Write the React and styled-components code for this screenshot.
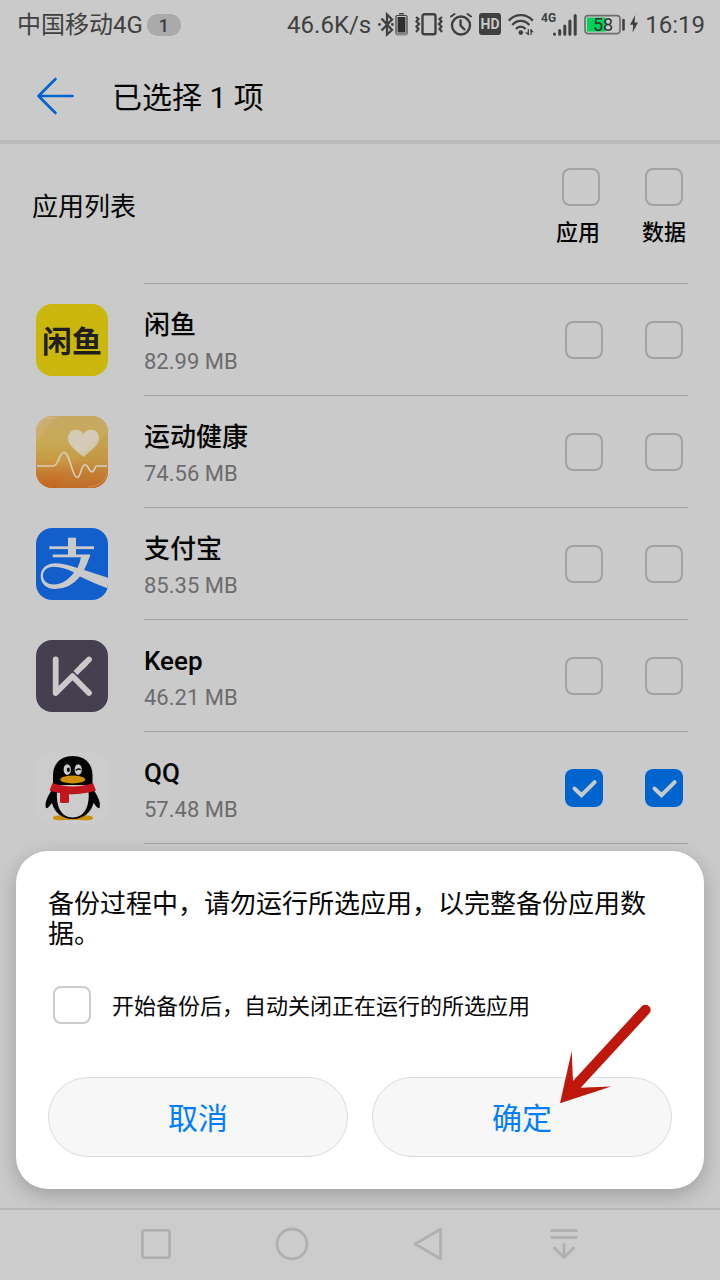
import React from "react";
import styled, { createGlobalStyle } from "styled-components";

const GlobalStyle = createGlobalStyle`
  * { box-sizing: border-box; }
  body {
    margin: 0;
    background: #cacaca;
    color: #050505;
    font-family: Roboto, "Noto Sans CJK SC", sans-serif;
  }
  h1, h2, h3, p, ul { margin: 0; padding: 0; font-weight: 400; }
  button { font: inherit; }
  svg { display: block; }
`;

const Screen = styled.div`
  min-height: 100vh;
  display: flex;
  flex-direction: column;
`;

const Main = styled.main`
  position: relative;
  flex: 1;
  display: flex;
  flex-direction: column;
`;

const StatusBar = styled.header`
  height: 50px;
  padding: 0 15px 0 17px;
  display: flex;
  align-items: center;
  justify-content: space-between;
  font-size: 24px;
  line-height: 32px;
  color: #404040;
`;

const StatusGroup = styled.div`
  display: flex;
  align-items: center;
  gap: ${(p) => p.$gap}px;
`;

const CountPill = styled.span`
  width: 34px;
  height: 22px;
  border-radius: 11px;
  background: #aaaaaa;
  font-size: 18px;
  font-weight: 500;
  line-height: 23px;
  text-align: center;
`;

const TitleBar = styled.div`
  height: 94px;
  padding: 2px 32px 0;
  display: flex;
  align-items: center;
  gap: 36px;
  border-bottom: 4px solid #bababa;
`;

const BackButton = styled.button`
  width: 44px;
  height: 44px;
  padding: 0;
  border: 0;
  background: none;
`;

const Title = styled.h1`
  padding-top: 4px;
  font-size: 30px;
  line-height: 40px;
`;

const ListHead = styled.div`
  height: 139px;
  padding: 24px 34px 0 32px;
  display: flex;
  justify-content: space-between;
`;

const ListTitle = styled.h2`
  padding-top: 22px;
  font-size: 26px;
  line-height: 34px;
`;

const ColumnHeads = styled.div`
  display: flex;
  gap: 42px;
`;

const ColumnHead = styled.label`
  display: flex;
  flex-direction: column;
  align-items: ${(p) => p.$align};
  gap: 12px;
  font-size: 22px;
  font-weight: 500;
  line-height: 30px;
`;

const Divider = styled.hr`
  height: 1px;
  margin: 0 32px 0 144px;
  border: 0;
  background: #a2a2a2;
`;

const AppRow = styled.li`
  display: flex;
  align-items: center;
  gap: 36px;
  padding: 0 32px 0 36px;
`;

const RowBody = styled.div`
  flex: 1;
  height: 112px;
  padding-right: 5px;
  display: flex;
  align-items: center;
  justify-content: space-between;
  border-bottom: 1px solid #a2a2a2;
`;

const RowText = styled.div`
  padding-top: 6px;
`;

const AppName = styled.h3`
  font-size: 26px;
  font-weight: 500;
  line-height: 38px;
`;

const AppSize = styled.p`
  font-size: 22px;
  line-height: 36px;
  color: #6c6c6c;
`;

const RowChecks = styled.div`
  display: flex;
  gap: 42px;
`;

const AppIcon = styled.div`
  width: 72px;
  height: 72px;
  flex: none;
  border-radius: 16px;
  overflow: hidden;
  display: grid;
  place-items: center;
  background: ${(p) => p.$bg};
`;

const WordLogo = styled.span`
  padding-top: 4px;
  color: #1f1f1f;
  font-size: 30px;
  font-weight: 700;
  line-height: 36px;
`;

const CheckBox = styled.span`
  width: 38px;
  height: 38px;
  flex: none;
  display: grid;

  > * { grid-area: 1 / 1; }

  input {
    appearance: none;
    width: 38px;
    height: 38px;
    margin: 0;
    border: 2px solid ${(p) => p.$line || "#a2a2a2"};
    border-radius: 8px;
  }

  svg {
    visibility: hidden;
    pointer-events: none;
  }

  input:checked {
    border: 0;
    background: #0064cf;
  }

  input:checked + svg { visibility: visible; }
`;

const Dialog = styled.section`
  position: absolute;
  left: 16px;
  right: 16px;
  bottom: 19px;
  padding: 38px 32px 32px;
  border-radius: 32px;
  background: #ffffff;
  box-shadow: 0 6px 20px rgba(0, 0, 0, 0.22);
`;

const Message = styled.p`
  font-size: 26px;
  line-height: 30px;
`;

const Option = styled.label`
  margin: 37px 0 53px;
  padding-left: 5px;
  display: flex;
  align-items: center;
  gap: 21px;
  font-size: 22px;
  line-height: 30px;
`;

const OptionText = styled.span`
  padding-top: 4px;
`;

const Actions = styled.div`
  display: flex;
  gap: 24px;
`;

const ActionButton = styled.button`
  flex: 1;
  height: 80px;
  padding: 4px 0 0;
  border: 1px solid #dcdcdc;
  border-radius: 40px;
  background: #f7f7f7;
  color: #007dff;
  font-size: 30px;
  line-height: 40px;
`;

const Pointer = styled.svg`
  position: absolute;
  right: 48px;
  bottom: 81px;
  pointer-events: none;
`;

const NavBar = styled.nav`
  position: relative;
  height: 72px;
  padding: 0 88px 2px;
  display: flex;
  border-top: 2px solid #b8b8b8;
  background: #cccccc;
`;

const NavButton = styled.button`
  flex: 1;
  padding: 0;
  border: 0;
  background: none;
  display: grid;
  place-items: center;
`;

function Check({ line, ...rest }) {
  return (
    <CheckBox $line={line}>
      <input type="checkbox" {...rest} />
      <svg width="38" height="38" viewBox="0 0 38 38" fill="none" stroke="#cacaca" strokeWidth="4" strokeLinecap="round" strokeLinejoin="miter" aria-hidden="true">
        <path d="M9.5 19.5 16.5 26.2 29.7 13.2" />
      </svg>
    </CheckBox>
  );
}

const DARK = "#404040";

function BluetoothIcon() {
  return (
    <svg width="30" height="26" viewBox="0 0 30 26" aria-hidden="true">
      <g fill="none" stroke={DARK} strokeWidth="2.3">
        <path d="M3.5 6.5 14 18 9 22.500V2.500L14 7.500 3.500 18.500" />
      </g>
      <circle cx="1.5" cy="12.5" r="1.4" fill={DARK} />
      <circle cx="14.400" cy="12.500" r="1.400" fill={DARK} />
      <rect x="21" y="1" width="5" height="1.5" fill={DARK} />
      <rect x="18" y="3.500" width="11" height="19" rx="1.200" fill="none" stroke={DARK} strokeWidth="1.200" />
      <rect x="19.600" y="5" width="7.800" height="15.500" fill="#2e2e2e" />
      <rect x="18" y="21" width="11" height="2.400" fill="#858585" />
    </svg>
  );
}

function VibrateIcon() {
  return (
    <svg width="28" height="26" viewBox="0 0 28 26" fill="none" stroke={DARK} aria-hidden="true">
      <rect x="7.500" y="2.200" width="13" height="20" rx="2" strokeWidth="2.400" />
      <path d="M1 5 3.500 7 1.500 9.500 4 12 1.500 14.500 3.500 17 1 20M27 5 24.500 7 26.500 9.500 24 12 26.500 14.500 24.500 17 27 20" strokeWidth="2.200" />
    </svg>
  );
}

function AlarmIcon() {
  return (
    <svg width="22" height="26" viewBox="0 0 22 26" fill="none" stroke={DARK} strokeWidth="2" strokeLinecap="round" aria-hidden="true">
      <circle cx="11" cy="13.500" r="9" strokeWidth="2.400" />
      <path d="M1 4.500 4.500 2M21 4.500 17.500 2" />
      <path d="M10.600 8.500V13.500L14.500 17.500" strokeWidth="2.400" />
    </svg>
  );
}

function HdIcon() {
  return (
    <svg width="22" height="26" viewBox="0 0 22 26" role="img" aria-label="HD">
      <rect y="1" width="22" height="22" rx="3" fill={DARK} />
      <text x="11" y="17" textAnchor="middle" fontSize="14" fontWeight="700" fill="#cacaca">HD</text>
    </svg>
  );
}

function WifiIcon() {
  return (
    <svg width="26" height="26" viewBox="0 0 26 26" fill="none" stroke={DARK} strokeWidth="2.300" aria-hidden="true">
      <path d="M.8 8.600C7.500 1.300 18 1.300 24.800 8.600" />
      <path d="M4.300 13C9 7.600 16.500 7.600 21.300 13" />
      <path d="M8 17C10.600 13.800 15 13.800 17.600 17" />
      <circle cx="12.800" cy="20.600" r="2.300" fill={DARK} stroke="none" />
      <path d="M21 17.500V23.500L16.800 20.500H21M22.800 23.500V17L26 20.200H22.800" fill={DARK} stroke="none" />
      <path d="M20.300 17V23M23 17V23" strokeWidth="1.200" />
    </svg>
  );
}

function SignalIcon() {
  return (
    <svg width="36" height="26" viewBox="0 0 36 26" role="img" aria-label="4G">
      <text x="0" y="10" fontSize="12" fontWeight="700" fill={DARK}>4G</text>
      <path d="M13.500 22.300V22M18.700 22.300V18.500M23.800 22.300V14M28.900 22.300V9M34.200 22.300V3.500" stroke={DARK} strokeWidth="3" strokeLinecap="round" />
    </svg>
  );
}

function BatteryIcon() {
  return (
    <svg width="42" height="26" viewBox="0 0 42 26" role="img" aria-label="58%">
      <rect x="1" y="3.600" width="35" height="18" rx="3" fill="none" stroke="#6c6c6c" strokeWidth="1.600" />
      <rect x="3" y="5.600" width="18.500" height="14" fill="#00d25a" />
      <path d="M39.500 8V17.500" stroke={DARK} strokeWidth="2.600" strokeLinecap="round" />
      <text x="19" y="19" textAnchor="middle" fontSize="18" fill="#333333">58</text>
    </svg>
  );
}

function BoltIcon() {
  return (
    <svg width="8" height="26" viewBox="0 0 8 26" fill={DARK} aria-hidden="true">
      <path d="M5.200 3 0 12.800H3.200L2.600 20.500 8 10.600H4.600Z" />
    </svg>
  );
}

function HealthLogo() {
  return (
    <svg width="72" height="72" viewBox="0 0 72 72" aria-hidden="true">
      <defs>
        <linearGradient id="health-bg" x1="0" y1="0" x2="0" y2="1">
          <stop offset="0" stopColor="#c6a765" />
          <stop offset="0.3" stopColor="#c8ab58" />
          <stop offset="0.62" stopColor="#c79a43" />
          <stop offset="0.8" stopColor="#c6792f" />
          <stop offset="1" stopColor="#c3651f" />
        </linearGradient>
        <linearGradient id="health-heart" x1="0" y1="0" x2="1" y2="1">
          <stop offset="0" stopColor="#d3cab6" />
          <stop offset="0.55" stopColor="#d4ccb8" />
          <stop offset="1" stopColor="#c9bb98" />
        </linearGradient>
      </defs>
      <rect width="72" height="72" fill="url(#health-bg)" />
      <path d="M0 26C8 16 12 8 24 0H8L0 8Z" fill="#d0b98a" opacity="0.3" />
      <path d="M72 14C60 34 32 42 22 72H72Z" fill="#b98a4a" opacity="0.22" />
      <path d="M47.500 41C40 34 32 29.500 32 22C32 17 35.500 13.700 40 13.700C43.500 13.700 46 15.500 47.500 18C49 15.500 51.500 13.700 55 13.700C59.500 13.700 63 17 63 22C63 29.500 55 34 47.500 41Z" fill="url(#health-heart)" />
      <path d="M1 50H17C23 50 23 36.500 28 36.500C34 36.500 36 61.500 41 61.500C45 61.500 45 48.800 49 48.800C52.500 48.800 53 55.800 56 55.800C59 55.800 58 50 61 50H71" fill="none" stroke="#d8cfbd" strokeWidth="1.600" />
      <path d="M52 71C62 70 69 66 71 57" fill="none" stroke="#dcb08a" strokeWidth="1" opacity="0.5" />
      <path d="M1.500 12C4 5 8 2 16 1.500" fill="none" stroke="#dcd2bc" strokeWidth="1" opacity="0.5" />
    </svg>
  );
}

function AlipayLogo() {
  return (
    <svg width="72" height="72" viewBox="0 0 72 72" fill="#cacaca" aria-hidden="true">
      <rect x="13.300" y="18.300" width="44.700" height="2.800" />
      <rect x="32" y="9.700" width="8" height="17.500" />
      <rect x="16.700" y="26.500" width="37.300" height="2.800" />
      <path fillRule="evenodd" d="M45.500 27H54Q51.500 36 48 42L72 49.800V60.500Q58 55.500 44 48.500Q34 61 19 61C10 61 4.700 55 4.700 48C4.700 40 11 35.300 20 35.300C27 35.300 34 37.500 41.500 40Q44 35 45.500 27ZM38 44.500C31 41 24 38.800 18 38.800C10.500 38.800 7 43 7 48C7 53 12 56.500 18 56.500C26 56.500 33 51 38 44.500Z" />
    </svg>
  );
}

function KeepLogo() {
  return (
    <svg width="72" height="72" viewBox="0 0 72 72" fill="none" stroke="#cacaca" strokeWidth="5.800" aria-hidden="true">
      <path d="M19.700 19.500V53L36.500 36.200 53 53" strokeLinecap="round" strokeLinejoin="round" />
      <path d="M39.500 33 50 22.500" />
      <path d="M46 26.500 53 19.500" strokeLinecap="round" />
    </svg>
  );
}

function QqLogo() {
  return (
    <svg width="72" height="72" viewBox="0 0 72 72" aria-hidden="true">
      <path d="M17 66C17 63 24 62.500 36 64C48 62.500 57 63 57 66C57 69 50 68 36.700 68C24 68 17 69 17 66Z" fill="#cb9008" />
      <path d="M16 38C11 45 8.500 51 10 56C12 57 14 53 16 51C18 60 26 67 36.700 67C47.500 67 55.500 60 57.500 51C59.500 53 61.500 57 63.500 56C65 51 62.500 45 57.500 38Z" fill="#030303" />
      <path d="M17 33V23C17 11.500 25 4 36.700 4C48.500 4 56.500 11.500 56.500 23V33Z" fill="#030303" />
      <path d="M21 40C20 54 25 65.500 36.700 65.500C48.500 65.500 54 54 52.500 39C42 43 31 43 21 40Z" fill="#cccccc" />
      <path d="M16.500 31C29 35.500 45 35.500 57 31L60 38.500C53 41 43 42.500 33 42V50.500C30 51.200 27 51.200 24 50.500V41C20 40.500 17 39.500 13.500 38.500Z" fill="#c0171d" />
      <ellipse cx="31.200" cy="17.600" rx="3.600" ry="5.300" fill="#cccccc" />
      <ellipse cx="42.200" cy="17.600" rx="3.600" ry="5.300" fill="#cccccc" />
      <ellipse cx="32.300" cy="17.800" rx="1.500" ry="2.200" fill="#030303" />
      <path d="M39.800 18.500Q42 15.800 44.800 17.800" fill="none" stroke="#030303" strokeWidth="1.300" />
      <ellipse cx="36.700" cy="27.500" rx="12.500" ry="3.900" fill="#cb9008" />
    </svg>
  );
}

const APPS = [
  { name: "闲鱼", size: "82.99 MB", bg: "#cbb70b", logo: <WordLogo>闲鱼</WordLogo> },
  { name: "运动健康", size: "74.56 MB", bg: "#c79a43", logo: <HealthLogo /> },
  { name: "支付宝", size: "85.35 MB", bg: "#125fcc", logo: <AlipayLogo /> },
  { name: "Keep", size: "46.21 MB", bg: "#463f4d", logo: <KeepLogo /> },
  { name: "QQ", size: "57.48 MB", bg: "#cccccc", logo: <QqLogo />, checked: true },
];

export default function App() {
  return (
    <Screen>
      <GlobalStyle />
      <Main>
        <StatusBar>
          <StatusGroup $gap={4}>
            <span>中国移动4G</span>
            <CountPill>1</CountPill>
          </StatusGroup>
          <StatusGroup $gap={7}>
            <span>46.6K/s</span>
            <BluetoothIcon />
            <VibrateIcon />
            <AlarmIcon />
            <HdIcon />
            <WifiIcon />
            <SignalIcon />
            <StatusGroup $gap={4}>
              <BatteryIcon />
              <BoltIcon />
            </StatusGroup>
            <span>16:19</span>
          </StatusGroup>
        </StatusBar>

        <TitleBar>
          <BackButton type="button" aria-label="返回">
            <svg width="44" height="44" viewBox="0 0 44 44" fill="none" stroke="#0064cf" strokeWidth="2.600" strokeLinecap="round" strokeLinejoin="round">
              <path d="M40.500 22H6.500M23.500 5 6.500 22 23.500 39" />
            </svg>
          </BackButton>
          <Title>已选择 1 项</Title>
        </TitleBar>

        <ListHead>
          <ListTitle>应用列表</ListTitle>
          <ColumnHeads>
            <ColumnHead $align="flex-end">
              <Check />
              应用
            </ColumnHead>
            <ColumnHead $align="center">
              <Check />
              数据
            </ColumnHead>
          </ColumnHeads>
        </ListHead>
        <Divider />

        <ul>
          {APPS.map((app) => (
            <AppRow key={app.name}>
              <AppIcon $bg={app.bg}>{app.logo}</AppIcon>
              <RowBody>
                <RowText>
                  <AppName>{app.name}</AppName>
                  <AppSize>{app.size}</AppSize>
                </RowText>
                <RowChecks>
                  <Check aria-label={`${app.name} 应用`} defaultChecked={app.checked} />
                  <Check aria-label={`${app.name} 数据`} defaultChecked={app.checked} />
                </RowChecks>
              </RowBody>
            </AppRow>
          ))}
        </ul>

        <Dialog role="dialog">
          <Message>备份过程中，请勿运行所选应用，以完整备份应用数据。</Message>
          <Option>
            <Check line="#cccccc" />
            <OptionText>开始备份后，自动关闭正在运行的所选应用</OptionText>
          </Option>
          <Actions>
            <ActionButton type="button">取消</ActionButton>
            <ActionButton type="button">确定</ActionButton>
          </Actions>
          <Pointer width="100" height="108" viewBox="0 0 100 108" fill="#bd180b" aria-hidden="true">
            <path d="M4 103.300 15.700 51 17 81 85.500 6.500A5.200 5.200 0 0 1 93.400 13.300L24.700 87.800 55 86.500Z" />
          </Pointer>
        </Dialog>
      </Main>

      <NavBar>
        <NavButton type="button" aria-label="最近任务">
          <svg width="32" height="34" viewBox="0 0 32 34" fill="none" stroke="#b0b0b0" strokeWidth="2.800">
            <rect x="2.400" y="3.400" width="27.200" height="27.200" rx="1" />
          </svg>
        </NavButton>
        <NavButton type="button" aria-label="主屏幕">
          <svg width="34" height="34" viewBox="0 0 34 34" fill="none" stroke="#b0b0b0" strokeWidth="2.800">
            <circle cx="17" cy="17" r="15" />
          </svg>
        </NavButton>
        <NavButton type="button" aria-label="返回上一页">
          <svg width="32" height="34" viewBox="0 0 32 34" fill="none" stroke="#b0b0b0" strokeWidth="2.800" strokeLinejoin="round">
            <path d="M28.500 2.200V31.800L3 17Z" />
          </svg>
        </NavButton>
        <NavButton type="button" aria-label="下拉通知">
          <svg width="30" height="34" viewBox="0 0 30 34" fill="none" stroke="#b0b0b0" strokeWidth="2.800" strokeLinecap="round" strokeLinejoin="round">
            <path d="M2.800 3.500H27.200M2.800 10.500H27.200M15 17.500V30.500M5.500 21 15 30.500 24.500 21" />
          </svg>
        </NavButton>
      </NavBar>
    </Screen>
  );
}
